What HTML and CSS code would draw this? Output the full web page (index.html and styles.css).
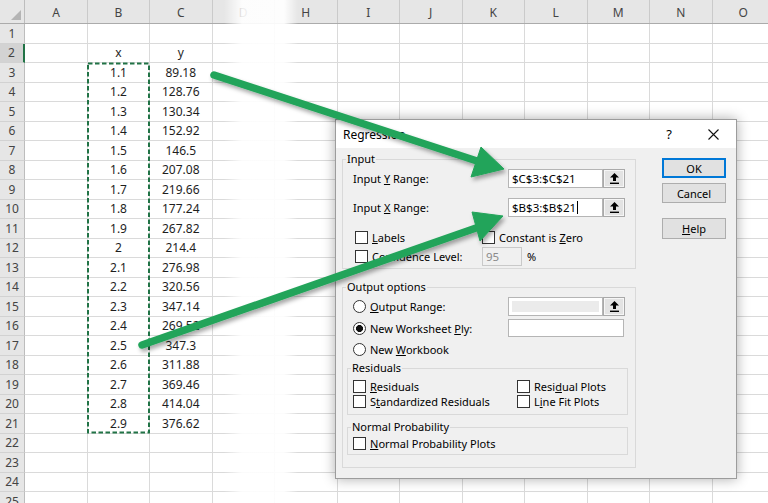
FILE: index.html
```html
<!DOCTYPE html>
<html lang="en">
<head>
<meta charset="utf-8">
<title>Regression</title>
<link rel="stylesheet" href="styles.css">
</head>
<body>
<div class="sheet">
  <div class="hdr">
    <span class="corner"><svg width="10" height="10" viewBox="0 0 10 10"><polygon points="10,0 10,10 0,10" fill="#b4b4b4"/></svg></span>
    <span>A</span><span>B</span><span>C</span><span>D</span><span>H</span><span>I</span><span>J</span><span>K</span><span>L</span><span>M</span><span>N</span><span>O</span>
  </div>
  <div class="row"><span class="rh">1</span><span></span><span></span><span></span><span class="rest"></span></div>
  <div class="row"><span class="rh act">2</span><span></span><span>x</span><span>y</span><span class="rest"></span></div>
  <div class="row"><span class="rh">3</span><span></span><span>1.1</span><span>89.18</span><span class="rest"></span></div>
  <div class="row"><span class="rh">4</span><span></span><span>1.2</span><span>128.76</span><span class="rest"></span></div>
  <div class="row"><span class="rh">5</span><span></span><span>1.3</span><span>130.34</span><span class="rest"></span></div>
  <div class="row"><span class="rh">6</span><span></span><span>1.4</span><span>152.92</span><span class="rest"></span></div>
  <div class="row"><span class="rh">7</span><span></span><span>1.5</span><span>146.5</span><span class="rest"></span></div>
  <div class="row"><span class="rh">8</span><span></span><span>1.6</span><span>207.08</span><span class="rest"></span></div>
  <div class="row"><span class="rh">9</span><span></span><span>1.7</span><span>219.66</span><span class="rest"></span></div>
  <div class="row"><span class="rh">10</span><span></span><span>1.8</span><span>177.24</span><span class="rest"></span></div>
  <div class="row"><span class="rh">11</span><span></span><span>1.9</span><span>267.82</span><span class="rest"></span></div>
  <div class="row"><span class="rh">12</span><span></span><span>2</span><span>214.4</span><span class="rest"></span></div>
  <div class="row"><span class="rh">13</span><span></span><span>2.1</span><span>276.98</span><span class="rest"></span></div>
  <div class="row"><span class="rh">14</span><span></span><span>2.2</span><span>320.56</span><span class="rest"></span></div>
  <div class="row"><span class="rh">15</span><span></span><span>2.3</span><span>347.14</span><span class="rest"></span></div>
  <div class="row"><span class="rh">16</span><span></span><span>2.4</span><span>269.52</span><span class="rest"></span></div>
  <div class="row"><span class="rh">17</span><span></span><span>2.5</span><span>347.3</span><span class="rest"></span></div>
  <div class="row"><span class="rh">18</span><span></span><span>2.6</span><span>311.88</span><span class="rest"></span></div>
  <div class="row"><span class="rh">19</span><span></span><span>2.7</span><span>369.46</span><span class="rest"></span></div>
  <div class="row"><span class="rh">20</span><span></span><span>2.8</span><span>414.04</span><span class="rest"></span></div>
  <div class="row"><span class="rh">21</span><span></span><span>2.9</span><span>376.62</span><span class="rest"></span></div>
  <div class="row"><span class="rh">22</span><span></span><span></span><span></span><span class="rest"></span></div>
  <div class="row"><span class="rh">23</span><span></span><span></span><span></span><span class="rest"></span></div>
  <div class="row"><span class="rh">24</span><span></span><span></span><span></span><span class="rest"></span></div>
  <div class="row"><span class="rh">25</span><span></span><span></span><span></span><span class="rest"></span></div>
</div>

<div class="fade"></div>

<div class="dlg">
  <div class="title">
    <span class="name">Regression</span>
    <span class="q">?</span>
    <span class="x"><svg width="11" height="11" viewBox="0 0 11 11"><path d="M0.5 0.5L10.5 10.5M10.5 0.5L0.5 10.5" stroke="#111" stroke-width="1.1"/></svg></span>
  </div>
  <div class="body">
    <div class="main">
      <fieldset class="grp g-input">
        <legend>Input</legend>
        <div class="inner in-pad">
          <div class="line">
            <span class="lbl">Input <u>Y</u> Range:</span>
            <span class="tb w95">$C$3:$C$21</span>
            <span class="pick"><svg width="9" height="11" viewBox="0 0 9 11"><path d="M4.5 0L0 4.5H3V8H6V4.5H9Z" fill="#000"/><rect x="0" y="9.6" width="9" height="1.4" fill="#000"/></svg></span>
          </div>
          <div class="line l2">
            <span class="lbl">Input <u>X</u> Range:</span>
            <span class="tb w95"><span>$B$3:$B$21</span><i class="caret"></i></span>
            <span class="pick"><svg width="9" height="11" viewBox="0 0 9 11"><path d="M4.5 0L0 4.5H3V8H6V4.5H9Z" fill="#000"/><rect x="0" y="9.6" width="9" height="1.4" fill="#000"/></svg></span>
          </div>
          <div class="opts o1">
            <span class="cb"><i class="box"></i><span><u>L</u>abels</span></span>
            <span class="cb"><i class="box"></i><span>Constant is <u>Z</u>ero</span></span>
          </div>
          <div class="opts o2">
            <span class="cb"><i class="box"></i><span>C<u>o</u>nfidence Level:</span></span>
            <span class="conf"><span class="tb dis95">95</span><span class="pct">%</span></span>
          </div>
        </div>
      </fieldset>

      <fieldset class="grp g-out">
        <legend>Output options</legend>
        <div class="inner out-pad">
          <div class="line rl">
            <span class="lbl rlbl"><i class="radio"></i><span><u>O</u>utput Range:</span></span>
            <span class="tb w95 dis"></span>
            <span class="pick"><svg width="9" height="11" viewBox="0 0 9 11"><path d="M4.5 0L0 4.5H3V8H6V4.5H9Z" fill="#000"/><rect x="0" y="9.6" width="9" height="1.4" fill="#000"/></svg></span>
          </div>
          <div class="line rl r2">
            <span class="lbl rlbl"><i class="radio on"></i><span>New Worksheet <u>P</u>ly:</span></span>
            <span class="tb w116"></span>
          </div>
          <div class="line rl r3">
            <span class="lbl rlbl"><i class="radio"></i><span>New <u>W</u>orkbook</span></span>
          </div>

          <fieldset class="grp g-res">
            <legend>Residuals</legend>
            <div class="inner res-pad">
              <span class="cb"><i class="box"></i><span><u>R</u>esiduals</span></span>
              <span class="cb"><i class="box"></i><span>Resi<u>d</u>ual Plots</span></span>
              <span class="cb"><i class="box"></i><span>S<u>t</u>andardized Residuals</span></span>
              <span class="cb"><i class="box"></i><span>L<u>i</u>ne Fit Plots</span></span>
            </div>
          </fieldset>

          <fieldset class="grp g-np">
            <legend>Normal Probability</legend>
            <div class="inner np-pad">
              <span class="cb"><i class="box"></i><span><u>N</u>ormal Probability Plots</span></span>
            </div>
          </fieldset>
        </div>
      </fieldset>
    </div>
    <div class="btns">
      <button class="btn ok">OK</button>
      <button class="btn cancel">Cancel</button>
      <button class="btn help"><u>H</u>elp</button>
    </div>
  </div>
</div>

<svg class="marks" width="768" height="503" viewBox="0 0 768 503">
  <defs>
    <filter id="sh" x="-10%" y="-10%" width="130%" height="140%">
      <feDropShadow dx="2" dy="3" stdDeviation="2" flood-color="#000" flood-opacity="0.35"/>
    </filter>
  </defs>
  <rect x="88" y="63.5" width="61" height="369" fill="none" stroke="#217346" stroke-width="2" stroke-dasharray="4.5 2.5"/>
  <g filter="url(#sh)" fill="#22a45a" stroke="#22a45a">
    <line x1="214" y1="75" x2="477" y2="161" stroke-width="7.5" stroke-linecap="round"/>
    <polygon points="481,147 504,169 471,177" stroke-width="1" stroke-linejoin="round"/>
    <line x1="142" y1="345" x2="476" y2="228" stroke-width="7.5" stroke-linecap="round"/>
    <polygon points="472,212 503,216 480,241" stroke-width="1" stroke-linejoin="round"/>
  </g>
</svg>
</body>
</html>
```

FILE: styles.css
```css
* { box-sizing: border-box; }
html, body { margin: 0; }
body {
  width: 768px;
  height: 503px;
  overflow: hidden;
  position: relative;
  background: #fff;
  font-family: "Noto Sans", "Liberation Sans", sans-serif;
  color: #222;
}

/* ---------- spreadsheet ---------- */
.sheet { font-size: 12px; }
.hdr {
  display: grid;
  grid-template-columns: 25px 63px 62px 62.5px repeat(9, 62.5px);
  height: 24px;
  background: #e6e6e6;
  border-bottom: 1px solid #ababab;
  color: #444;
}
.hdr span {
  display: flex;
  align-items: center;
  justify-content: center;
  border-right: 1px solid #cacaca;
  padding-top: 1px;
}
.hdr .corner {
  align-items: flex-end;
  justify-content: flex-end;
  padding: 0 3px 3px 0;
  border-right-color: #bdbdbd;
}
.row {
  display: grid;
  grid-template-columns: 25px 63px 62px 62.5px 1fr;
  height: 19.5px;
}
.row span {
  display: flex;
  align-items: center;
  justify-content: center;
  border-right: 1px solid #dadada;
  border-bottom: 1px solid #dadada;
  color: #1e1e1e;
}
.row .rh {
  background: #e6e6e6;
  color: #444;
  border-right-color: #bdbdbd;
  border-bottom-color: #d2d2d2;
}
.row .rh.act {
  background: #d3d3d3;
  border-right: 2px solid #217346;
}
.row .rest {
  border-right: none;
  background: repeating-linear-gradient(90deg, transparent 0 61.5px, #dadada 61.5px 62.5px);
}

.fade {
  position: absolute;
  left: 224px;
  top: 0;
  width: 74px;
  height: 503px;
  background: linear-gradient(90deg, rgba(255,255,255,0) 0, rgba(255,255,255,0.9) 18px, rgba(255,255,255,0.92) 60px, rgba(255,255,255,0) 74px);
}

/* ---------- dialog ---------- */
.dlg {
  position: absolute;
  left: 335px;
  top: 119px;
  width: 402px;
  height: 360px;
  background: #f0f0f0;
  border: 1px solid #9c9c9c;
  box-shadow: 0 0 12px rgba(0,0,0,0.33);
  font-size: 11px;
  color: #000;
  display: flex;
  flex-direction: column;
}
.title {
  height: 28px;
  background: #fff;
  display: flex;
  align-items: center;
  padding-left: 7px;
  font-size: 12px;
  flex: none;
}
.title .name { flex: 1; }
.title .q { font-size: 13px; margin-right: 36px; }
.title .x { display: flex; margin-right: 17px; }

.body {
  display: flex;
  padding: 4px 0 0 6px;
}
.main { width: 294px; flex: none; }

.grp {
  margin: 0;
  padding: 0;
  min-width: 0;
  border: 1px solid #d9d9d9;
}
.grp legend {
  padding: 0 1px;
  margin-left: 3px;
  line-height: 14px;
  font-size: 11px;
}
.g-input { height: 117px; }
.in-pad { padding: 3px 0 0 10px; }

.line {
  display: flex;
  align-items: center;
  height: 19px;
}
.line.l2 { margin-top: 10px; }
.lbl { width: 155px; flex: none; }
.tb {
  height: 19px;
  background: #fff;
  border: 1px solid #b5b5b5;
  padding-left: 3px;
  display: flex;
  align-items: center;
  font-size: 11.5px;
}
.w95 { width: 95px; }
.w116 { width: 116px; height: 18px; }
.tb.dis {
  background: #ebebeb;
  box-shadow: inset 0 0 0 3px #fff;
}
.caret {
  display: inline-block;
  width: 1px;
  height: 13px;
  background: #000;
  margin-left: 1px;
}
.pick {
  width: 22px;
  height: 19px;
  flex: none;
  display: flex;
  align-items: center;
  justify-content: center;
  background: #e3e3e3;
  border: 1px solid #a9a9a9;
  box-shadow: inset 0 0 0 1px #f6f6f6;
}

.opts {
  display: grid;
  grid-template-columns: 127px auto;
  align-items: center;
  padding-left: 2px;
}
.o1 { margin-top: 12px; height: 17px; }
.o2 { margin-top: 1px; height: 19px; }
.cb {
  display: flex;
  align-items: center;
  gap: 4px;
  white-space: nowrap;
}
.box {
  display: inline-block;
  width: 13px;
  height: 13px;
  border: 1px solid #333;
  background: #fff;
  flex: none;
}
.conf { display: flex; align-items: center; }
.dis95 {
  width: 40px;
  background: #f0f0f0;
  border-color: #c9c9c9;
  color: #8a8a8a;
}
.pct { margin-left: 5px; }

.grp.g-out { margin-top: 11px; height: 188px; }
.out-pad { padding: 3px 0 0 4px; }
.rl .rlbl {
  width: 161px;
  padding-left: 6px;
  display: flex;
  align-items: center;
  gap: 4px;
}
.rl.r2 { margin-top: 3px; height: 18px; }
.rl.r3 { margin-top: 3px; }
.radio {
  display: inline-block;
  width: 13px;
  height: 13px;
  border: 1px solid #333;
  border-radius: 50%;
  background: #fff;
  flex: none;
}
.radio.on {
  background: radial-gradient(circle, #111 0 3.2px, #fff 3.8px);
}

.grp.g-res { margin-top: 2px; width: 281px; height: 54px; }
.res-pad {
  display: grid;
  grid-template-columns: 164px 1fr;
  grid-auto-rows: 15px;
  padding: 4px 0 0 5px;
}
.grp.g-np { margin-top: 5px; width: 281px; height: 35px; }
.np-pad {
  display: grid;
  grid-auto-rows: 15px;
  padding: 2px 0 0 5px;
}

.btns {
  display: flex;
  flex-direction: column;
  width: 64px;
  margin-left: 26px;
  padding-top: 6px;
}
.btn {
  font: inherit;
  font-size: 11px;
  color: #000;
  background: #e1e1e1;
  border: 1px solid #adadad;
  padding: 0;
  height: 20px;
}
.btn.ok {
  border-color: #0078d7;
  box-shadow: inset 0 0 0 1px #0078d7;
}
.btn.cancel { margin-top: 5px; }
.btn.help { margin-top: 15px; height: 21px; }

/* ---------- annotations ---------- */
.marks {
  position: absolute;
  left: 0;
  top: 0;
  pointer-events: none;
}
```
